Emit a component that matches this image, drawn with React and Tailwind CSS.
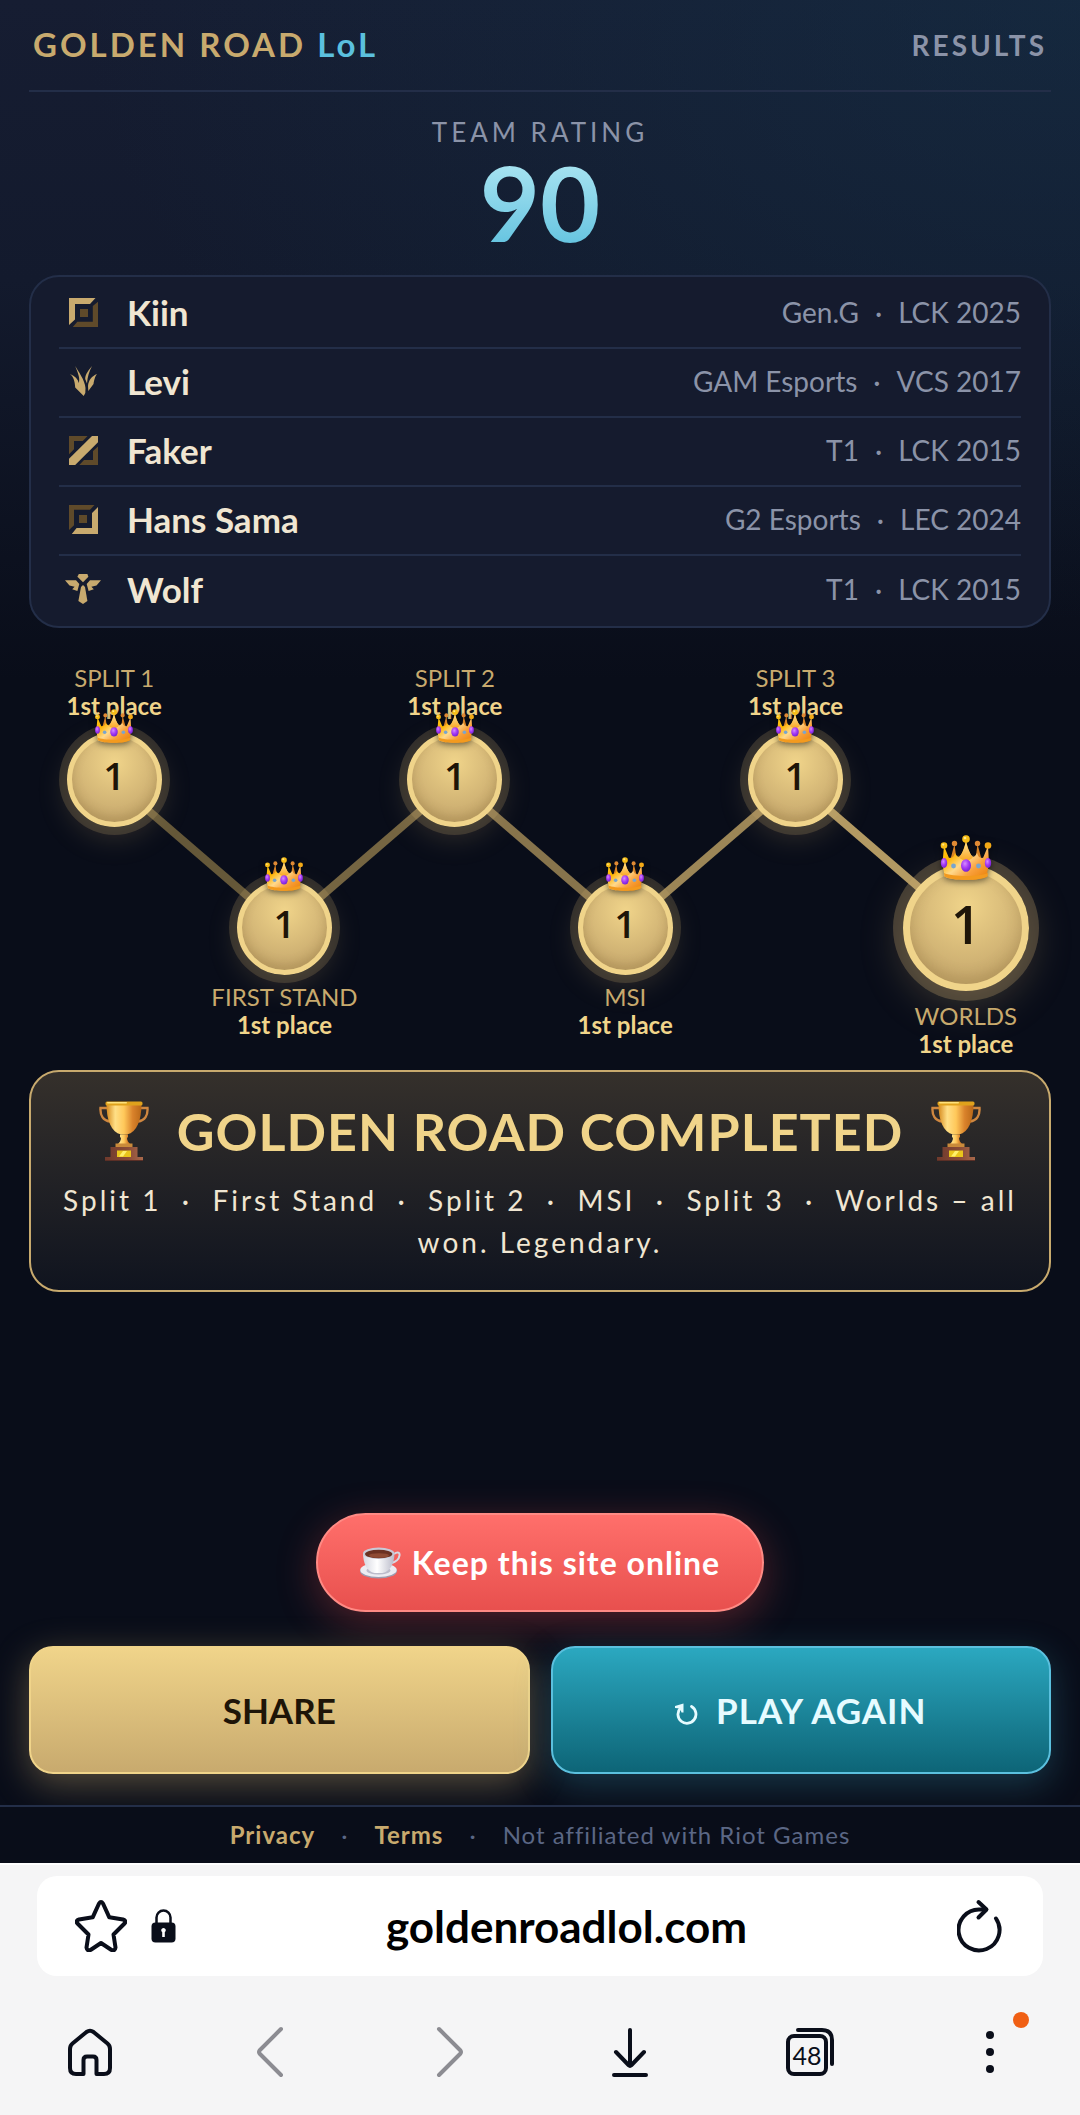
import React from 'react';

const players = [
  { name: 'Kiin', role: 'top', team: 'Gen.G', season: 'LCK 2025' },
  { name: 'Levi', role: 'jungle', team: 'GAM Esports', season: 'VCS 2017' },
  { name: 'Faker', role: 'mid', team: 'T1', season: 'LCK 2015' },
  { name: 'Hans Sama', role: 'bot', team: 'G2 Esports', season: 'LEC 2024' },
  { name: 'Wolf', role: 'support', team: 'T1', season: 'LCK 2015' },
];

const stages = [
  { name: 'SPLIT 1', place: 1, row: 'top' },
  { name: 'FIRST STAND', place: 1, row: 'bottom' },
  { name: 'SPLIT 2', place: 1, row: 'top' },
  { name: 'MSI', place: 1, row: 'bottom' },
  { name: 'SPLIT 3', place: 1, row: 'top' },
  { name: 'WORLDS', place: 1, row: 'bottom', final: true },
];

// Node centres inside the road, x in percent of the width
const roadLines = [
  { x1: '8.33%', y1: 117, x2: '25%', y2: 264, color: '#655839' },
  { x1: '25%', y1: 264, x2: '41.67%', y2: 117, color: '#756542' },
  { x1: '41.67%', y1: 117, x2: '58.33%', y2: 264, color: '#87744c' },
  { x1: '58.33%', y1: 264, x2: '75%', y2: 117, color: '#9c8657' },
  { x1: '75%', y1: 117, x2: '91.67%', y2: 264, color: '#b39a63' },
];

const RoleIcon = ({ role }) => {
  const gold = '#c8aa6e';
  const dim = '#5f4a2a';

  if (role === 'support') {
    return (
      <svg width="36" height="30" viewBox="0 0 36 30" fill={gold} aria-hidden="true">
        <path d="M13.8 0h8.6l1 2.7L18 8.3l-5.6-5.6z" />
        <path d="M0 6.3h11l3.3 3.7-1.9 7-5.2-1.7 2.4-2.6-5.1-1.2z" />
        <path d="M36 6.3H25L21.7 10l1.9 7 5.2-1.7-2.4-2.6 5.1-1.2z" />
        <path d="M18 11l2 2 2.4 14L18 30l-4.6-3L16 13z" />
      </svg>
    );
  }

  if (role === 'jungle') {
    return (
      <svg width="29" height="30" viewBox="0 0 29 30" fill={gold} aria-hidden="true">
        <path d="M6.2 0C9 5 16 14 16.5 22l-.2 5-1.6 3-8.5-8.500C6 15 4 10 1 8c5 2 8 5 8.800 9C11.500 12 8.500 6 6.200 0z" />
        <path d="M23 0c-3 4-7 8-6.800 13l1.800 4.500C18.500 11 20 6 23 0z" />
        <path d="M28 8c-2 2-3 7-3.500 10l-5.200 7-.3-5c.5-6 4-10 9-12z" />
      </svg>
    );
  }

  return (
    <svg width="29" height="29" viewBox="0 0 29 29" aria-hidden="true">
      {role === 'top' && (
        <>
          <path fill={gold} d="M0 0h26.500L21 6H6v15.500L0 27z" />
          <path fill={dim} d="M29 3.700V29H3.800l4.500-5.300h15.500V8zM11 11h8v8h-8z" />
        </>
      )}
      {role === 'mid' && (
        <>
          <path fill={dim} d="M0 0h18.600l-4.800 5H5v8.300l-5 5zM29 10.500V29H10.300l4.700-5h9v-9z" />
          <path fill={gold} d="M23 0h6v6.300L6.200 29H0v-6.300z" />
        </>
      )}
      {role === 'bot' && (
        <>
          <path fill={dim} d="M0 0h25.500L21 4.700H5v15.600L0 25zM10 10h8v8h-8z" />
          <path fill={gold} d="M29 2v27H2.800l4.800-6H23V8z" />
        </>
      )}
    </svg>
  );
};

const Crown = ({ className }) => (
  <svg viewBox="0 0 52 45" className={className} aria-hidden="true">
    <defs>
      <linearGradient id="crownBody" x1="0" y1="0" x2="1" y2="1">
        <stop offset="0" stopColor="#ffd21f" />
        <stop offset="0.3" stopColor="#ffb300" />
        <stop offset="0.5" stopColor="#ffd98c" />
        <stop offset="0.7" stopColor="#f9a03c" />
        <stop offset="1" stopColor="#e87d00" />
      </linearGradient>
      <linearGradient id="crownSpike" x1="0" y1="0" x2="0" y2="1">
        <stop offset="0" stopColor="#ffe9a8" />
        <stop offset="1" stopColor="#f9a620" />
      </linearGradient>
      <radialGradient id="crownGem" cx="0.4" cy="0.35" r="0.7">
        <stop offset="0" stopColor="#d58bff" />
        <stop offset="0.5" stopColor="#a63bf5" />
        <stop offset="1" stopColor="#6d1ed0" />
      </radialGradient>
    </defs>
    <path d="M14.500 9l1.800 14h-5.500zM37.500 9l-1.800 14h5.500z" fill="#d98324" />
    <path
      d="M4 11l5 12c4 0 5-2 6-5 2 4 4 5 6 2 2-4 4-9 5-15 1 6 3 11 5 15 2 3 4 2 6-2 1 3 2 5 6 5l5-12 1 17-2.500 13.500C41 46 11 46 4.500 41.500L2.500 28z"
      fill="url(#crownBody)"
    />
    <path d="M26 5c-1 9-4 14-7 17 4 5 10 5 14 0-3-3-6-8-7-17z" fill="url(#crownSpike)" />
    <path d="M4 38c8 4 36 4 44 0l-.5 3.500C41 46 11 46 4.500 41.500z" fill="#f39a1e" />
    <circle cx="4" cy="10.500" r="3.300" fill="#f8bd16" />
    <circle cx="48" cy="10.500" r="3.300" fill="#f3a916" />
    <circle cx="14.500" cy="8.500" r="2.700" fill="#e08a34" />
    <circle cx="37.500" cy="8.500" r="2.700" fill="#e08a34" />
    <circle cx="26" cy="4" r="3.800" fill="#f8bd16" />
    <circle cx="25" cy="3" r="1.300" fill="#ffe88a" />
    <circle cx="3.200" cy="9.600" r="1.100" fill="#ffe88a" />
    <ellipse cx="26" cy="30.500" rx="5" ry="6.300" fill="url(#crownGem)" />
    <ellipse cx="4" cy="28" rx="3.200" ry="5" fill="url(#crownGem)" />
    <ellipse cx="48" cy="28" rx="3.200" ry="5" fill="url(#crownGem)" />
    <circle cx="13.500" cy="31" r="2.400" fill="#78a5cf" />
    <circle cx="38.500" cy="31" r="2.400" fill="#78a5cf" />
  </svg>
);

const Trophy = () => (
  <svg width="50" height="60" viewBox="0 0 50 60" className="shrink-0" aria-hidden="true">
    <defs>
      <linearGradient id="cupBody" x1="0" y1="0" x2="1" y2="0">
        <stop offset="0" stopColor="#d68a1e" />
        <stop offset="0.25" stopColor="#ffdf86" />
        <stop offset="0.5" stopColor="#ffc85a" />
        <stop offset="0.75" stopColor="#d9822b" />
        <stop offset="1" stopColor="#b96818" />
      </linearGradient>
      <linearGradient id="cupBase" x1="0" y1="0" x2="1" y2="0">
        <stop offset="0" stopColor="#6f3a2c" />
        <stop offset="0.6" stopColor="#8a4c37" />
        <stop offset="1" stopColor="#a9694b" />
      </linearGradient>
    </defs>
    <path d="M8 7H1.500C1 14 4 19.500 11 20.500M42 7h6.500C49 14 46 19.500 39 20.500" fill="none" stroke="#cf8740" strokeWidth="2.400" />
    <path d="M7.500 3h35C42.500 19 38 31 28 33.500h-6C12 31 7.500 19 7.500 3z" fill="url(#cupBody)" />
    <rect x="6.500" y="0.500" width="37" height="4" rx="1.500" fill="#e0a21c" />
    <rect x="8" y="1" width="20" height="1.500" rx="0.700" fill="#ffe27a" />
    <path d="M21 33.500h8v3h-1c0 3 1 5 4.500 7.500h-15c3.500-2.500 4.500-4.500 4.500-7.500h-1z" fill="url(#cupBody)" />
    <path d="M16.500 42.500h17v4h-17z" fill="#c98a3a" />
    <path d="M11.500 46h27v10h5.500v4H6v-4h5.500z" fill="url(#cupBase)" />
    <path d="M6 59h38v1H6z" fill="#5b2f26" />
    <rect x="18" y="49.500" width="14" height="6.500" fill="#e9c51c" />
    <path d="M20 55.500l4-5.500h4l-4 5.500z" fill="#fff06a" />
  </svg>
);

const Coffee = () => (
  <svg width="41" height="32" viewBox="0 0 41 32" aria-hidden="true">
    <defs>
      <linearGradient id="china" x1="0" y1="0" x2="1" y2="0">
        <stop offset="0" stopColor="#d5d6e0" />
        <stop offset="0.45" stopColor="#ffffff" />
        <stop offset="1" stopColor="#b9bac9" />
      </linearGradient>
    </defs>
    <ellipse cx="18.500" cy="24" rx="18.500" ry="7.500" fill="#9c9caf" />
    <ellipse cx="18.500" cy="23" rx="18.200" ry="7" fill="#ececf2" />
    <ellipse cx="18.500" cy="23.500" rx="12" ry="4" fill="#bcbccb" />
    <path d="M34 7c4-3 6-1 5.500 1.500C39 12 35.500 15 32 16" fill="none" stroke="#d9d9e3" strokeWidth="2" />
    <path d="M3 6c0 10 4 19 11.500 20h8C30 25 34.500 16 34.500 6z" fill="url(#china)" />
    <ellipse cx="18.700" cy="6.200" rx="15.700" ry="5.700" fill="#c9c9d6" />
    <ellipse cx="18.700" cy="7" rx="13.700" ry="4.300" fill="#6b3122" />
    <ellipse cx="19" cy="8.500" rx="10" ry="2.300" fill="#8e4a33" />
  </svg>
);

const StageLabel = ({ stage }) => (
  <div className="text-center whitespace-nowrap text-[24px] leading-7">
    <div className="text-[#c8aa6e]">{stage.name}</div>
    <div className="font-bold text-[#f0d48a]">{stage.place}st place</div>
  </div>
);

const StageNode = ({ stage }) => (
  <div
    className={`relative shrink-0 flex items-center justify-center pb-2 rounded-full border-[#f0d48a] bg-[radial-gradient(circle_at_50%_30%,#f0d48a,#c8aa6e_75%)] font-['Open_Sans',sans-serif] font-semibold text-[#1e1508] ${
      stage.final
        ? 'w-[126px] h-[126px] border-[7px] text-[52px] shadow-[0_0_0_10px_rgba(200,170,110,0.28),0_12px_44px_rgba(200,170,110,0.3),inset_0_-6px_14px_rgba(120,90,40,0.25)]'
        : 'w-[95px] h-[95px] border-[5px] text-[38px] shadow-[0_0_0_8px_rgba(200,170,110,0.2),0_10px_30px_rgba(200,170,110,0.22),inset_0_-5px_10px_rgba(120,90,40,0.25)]'
    }`}
  >
    {stage.place}
    <Crown
      className={`absolute left-1/2 -translate-x-1/2 drop-shadow-[0_2px_3px_rgba(0,0,0,0.5)] ${
        stage.final ? 'w-[52px] -top-[37px]' : 'w-[39px] -top-[28px]'
      }`}
    />
  </div>
);

const App = () => {
  return (
    <div className="min-h-screen flex flex-col font-['Lato','Liberation_Sans',sans-serif] bg-[#090d19]">
      <div className="flex-1 flex flex-col bg-[radial-gradient(ellipse_1000px_620px_at_100%_0,rgba(20,56,80,0.42),transparent),linear-gradient(to_bottom,#161d32_0,#131a2d_280px,#090d19_680px)]">
        <main className="flex-1 flex flex-col px-[29px] pb-[31px]">
          {/* Header */}
          <header className="flex items-center justify-between h-[92px] px-1 border-b-2 border-[#232e48]">
            <h1 className="text-[33px] font-bold tracking-[3px] text-[#c8aa6e]">
              GOLDEN ROAD <span className="text-[#5bc0de]">LoL</span>
            </h1>
            <span className="text-[28px] font-bold tracking-[3px] text-[#8b93a8]">RESULTS</span>
          </header>

          {/* Rating */}
          <section className="mt-6 text-center">
            <p className="text-[26px] leading-8 tracking-[4px] text-[#8b93a8]">TEAM RATING</p>
            <p className="text-[104px] leading-[108px] font-bold bg-linear-to-b from-[#b2e9f4] to-[#5bc0de] bg-clip-text text-transparent">
              90
            </p>
          </section>

          {/* Roster */}
          <ul className="mt-[19px] px-7 pt-[3px] pb-px rounded-[30px] border-2 border-[#232e48] bg-[#151b2e] divide-y-2 divide-[#232e48]">
            {players.map((player) => (
              <li key={player.name} className="flex items-center h-[69px] pb-[3px]">
                <span className="w-12 flex justify-center">
                  <RoleIcon role={player.role} />
                </span>
                <span className="ml-5 text-[35px] font-bold text-[#f0e6d2]">{player.name}</span>
                <span className="ml-auto flex gap-4 text-[28px] text-[#8b93a8]">
                  <span>{player.team}</span>
                  <span>·</span>
                  <span>{player.season}</span>
                </span>
              </li>
            ))}
          </ul>

          {/* Road */}
          <section className="relative mt-9">
            <svg className="absolute inset-0 w-full h-full" aria-hidden="true">
              {roadLines.map((line) => (
                <line
                  key={line.x1}
                  x1={line.x1}
                  y1={line.y1}
                  x2={line.x2}
                  y2={line.y2}
                  stroke={line.color}
                  strokeWidth="8"
                />
              ))}
            </svg>
            <div className="relative grid grid-cols-6">
              {stages.map((stage) =>
                stage.row === 'top' ? (
                  <div key={stage.name} className="flex flex-col items-center gap-3">
                    <StageLabel stage={stage} />
                    <StageNode stage={stage} />
                  </div>
                ) : (
                  <div
                    key={stage.name}
                    className={`flex flex-col items-center ${stage.final ? 'pt-[201px] gap-[11px]' : 'pt-[216px] gap-2'}`}
                  >
                    <StageNode stage={stage} />
                    <StageLabel stage={stage} />
                  </div>
                )
              )}
            </div>
          </section>

          {/* Banner */}
          <section className="mt-3 px-6 pt-[27px] pb-[27px] rounded-[30px] border-2 border-[#c8aa6e] bg-linear-to-b from-[#35302b] to-[#10141f] text-center">
            <div className="flex items-center justify-center gap-7">
              <Trophy />
              <h2 className="text-[52px] leading-[64px] font-bold tracking-[1px] text-[#f0d48a]">
                GOLDEN ROAD COMPLETED
              </h2>
              <Trophy />
            </div>
            <p className="mt-4 text-[28px] leading-[42px] tracking-[3px] text-[#f0e6d2]">
              Split 1 &nbsp;·&nbsp; First Stand &nbsp;·&nbsp; Split 2 &nbsp;·&nbsp; MSI &nbsp;·&nbsp; Split 3 &nbsp;·&nbsp; Worlds – all won. Legendary.
            </p>
          </section>

          {/* Actions */}
          <div className="mt-auto flex flex-col items-center">
            <button
              type="button"
              className="flex items-center gap-[11px] h-[99px] px-[42px] rounded-full border-2 border-[#ff8a84] bg-linear-to-b from-[#ff6f6b] to-[#e8504e] text-[32px] font-bold tracking-[1px] text-white shadow-[0_10px_40px_rgba(255,80,80,0.3)]"
            >
              <Coffee />
              Keep this site online
            </button>
            <div className="mt-[34px] w-full grid grid-cols-2 gap-[21px]">
              <button
                type="button"
                className="h-32 rounded-3xl border-2 border-[#f0d48a] bg-linear-to-b from-[#f0d48a] to-[#c8aa6e] text-[35px] font-bold text-[#1e1508] shadow-[0_10px_36px_rgba(200,170,110,0.4)]"
              >
                SHARE
              </button>
              <button
                type="button"
                className="flex items-center justify-center gap-[18px] h-32 rounded-3xl border-2 border-[#5bc0de] bg-linear-to-b from-[#2ba8c0] to-[#0d6577] text-[35px] font-bold tracking-[1px] text-[#e6fbff] shadow-[0_10px_36px_rgba(60,160,190,0.3)]"
              >
                <svg width="23" height="22" viewBox="0 0 23 22" className="mt-2" aria-hidden="true">
                  <path d="M5.500 5A9 9 0 1 0 16.500 3.500" fill="none" stroke="currentColor" strokeWidth="2.800" strokeLinecap="round" />
                  <path d="M0 3L8.500.5V9.500H6.500L5 5.500 0 5z" fill="currentColor" />
                </svg>
                PLAY AGAIN
              </button>
            </div>
          </div>
        </main>

        <footer className="flex items-center justify-center gap-[26px] h-[58px] border-t-2 border-[#232e48] bg-[#090d19] text-[24px] tracking-[1px] text-[#5b6785]">
          <a href="#privacy" className="font-bold text-[#c8aa6e]">Privacy</a>
          <span>·</span>
          <a href="#terms" className="font-bold text-[#c8aa6e]">Terms</a>
          <span>·</span>
          <span>Not affiliated with Riot Games</span>
        </footer>
      </div>

      {/* Browser bar */}
      <div className="bg-[#f5f5f6] border-t-2 border-white text-[#0a0e1a]">
        <div className="mx-[37px] mt-[11px] h-[100px] flex items-center rounded-[20px] bg-white pl-[38px] pr-[40px]">
          <button type="button" aria-label="Bookmark">
            <svg width="52" height="52" viewBox="0 0 52 52" fill="none" stroke="currentColor" strokeWidth="4" strokeLinejoin="round" aria-hidden="true">
              <path d="M24 3.500q2-3 4 0l6.300 13.800L48 19.500q4 1.200 1.500 4L38.500 34.500l2 13q-.5 3.800-4 2.500L26 43l-10.500 7q-3.500 1.300-4-2.500l2-13L2.500 23.500q-2.500-2.800 1.500-4l13.700-2.200z" />
            </svg>
          </button>
          <button type="button" aria-label="Site information" className="ml-6">
            <svg width="25" height="34" viewBox="0 0 25 34" aria-hidden="true">
              <path d="M5.500 15V8.500a7 7 0 0 1 14 0V15" fill="none" stroke="currentColor" strokeWidth="2.500" />
              <rect x="0.500" y="13.500" width="24" height="20" rx="4" fill="currentColor" />
              <path d="M12.500 19a2.300 2.300 0 0 1 1.300 4.200V28h-2.600v-4.800A2.300 2.300 0 0 1 12.500 19z" fill="#fff" />
            </svg>
          </button>
          <input
            type="text"
            aria-label="Address"
            defaultValue="goldenroadlol.com"
            className="flex-1 min-w-0 bg-transparent text-center text-[44px] font-bold text-black focus:outline-none"
          />
          <button type="button" aria-label="Reload">
            <svg width="46" height="54" viewBox="0 0 46 54" fill="none" stroke="currentColor" strokeWidth="4" strokeLinecap="round" strokeLinejoin="round" aria-hidden="true">
              <path d="M39 19.500A20.500 20.500 0 1 1 23 10.500h6" />
              <path d="M21.500 3l8 7.500-8 8" />
            </svg>
          </button>
        </div>
        <nav className="grid grid-cols-6 justify-items-center items-center h-[139px] pt-3">
          <button type="button" aria-label="Home">
            <svg width="46" height="50" viewBox="0 0 46 50" fill="none" stroke="currentColor" strokeWidth="4" strokeLinejoin="round" aria-hidden="true">
              <path d="M3 22q0-3.500 2.500-5.500l14-11.500q3.500-2.500 7 0l14 11.500Q43 18.500 43 22v19q0 6-6 6h-7.500V33q0-3.500-3.500-3.500h-6q-3.500 0-3.500 3.500v14H9q-6 0-6-6z" />
            </svg>
          </button>
          <button type="button" aria-label="Back" className="text-[#8c8c92]">
            <svg width="28" height="52" viewBox="0 0 28 52" fill="none" stroke="currentColor" strokeWidth="4" strokeLinecap="round" strokeLinejoin="round" aria-hidden="true">
              <path d="M25 3L3.500 24.500q-1 1.500 0 3L25 49" />
            </svg>
          </button>
          <button type="button" aria-label="Forward" className="text-[#8c8c92]">
            <svg width="28" height="52" viewBox="0 0 28 52" fill="none" stroke="currentColor" strokeWidth="4" strokeLinecap="round" strokeLinejoin="round" aria-hidden="true">
              <path d="M3 3l21.500 21.500q1 1.500 0 3L3 49" />
            </svg>
          </button>
          <button type="button" aria-label="Downloads">
            <svg width="38" height="50" viewBox="0 0 38 50" fill="none" stroke="currentColor" strokeWidth="4" strokeLinecap="round" strokeLinejoin="round" aria-hidden="true">
              <path d="M19 3v36M5 25l12.500 13q1.500 1 3 0L33 25M3 48h32" />
            </svg>
          </button>
          <button type="button" aria-label="Tabs" className="relative">
            <svg width="50" height="50" viewBox="0 0 50 50" fill="none" stroke="currentColor" strokeWidth="4" strokeLinecap="round" aria-hidden="true">
              <rect x="3" y="9" width="38" height="38" rx="6" />
              <path d="M13 3h24q10 0 10 10v24" />
            </svg>
            <span className="absolute left-1 top-[14px] w-9 text-center text-[25px] leading-7">48</span>
          </button>
          <button type="button" aria-label="Menu" className="relative">
            <svg width="10" height="44" viewBox="0 0 10 44" fill="currentColor" aria-hidden="true">
              <circle cx="5" cy="5" r="4" />
              <circle cx="5" cy="22" r="4" />
              <circle cx="5" cy="39" r="4" />
            </svg>
            <span className="absolute left-7 -top-[18px] w-4 h-4 rounded-full bg-[#f05f14]"></span>
          </button>
        </nav>
      </div>
    </div>
  );
};

export default App;
